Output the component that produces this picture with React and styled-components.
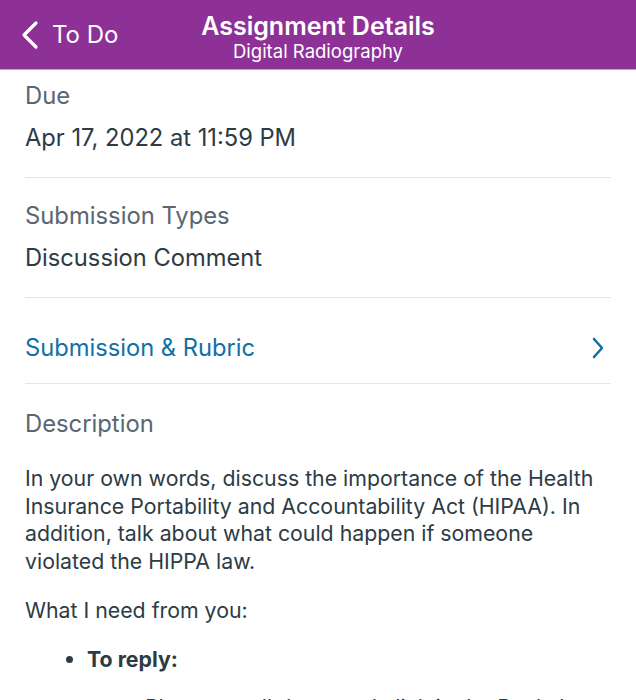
import React from 'react';
import styled, { createGlobalStyle } from 'styled-components';

const GlobalStyle = createGlobalStyle`
  html, body {
    margin: 0;
    padding: 0;
    background: #ffffff;
    font-family: Inter, Roboto, "Noto Sans", "Liberation Sans", sans-serif;
    -webkit-font-smoothing: antialiased;
  }
`;

const Page = styled.div`
  width: 636px;
  height: 700px;
  overflow: hidden;
  background: #fff;
`;

const Header = styled.div`
  height: 70px;
  background: #8d3197;
  display: grid;
  grid-template-columns: 1fr auto 1fr;
  align-items: center;
  color: #fff;
  box-sizing: border-box;
  border-bottom: 1px solid #c79ccd;
`;

const Back = styled.div`
  display: flex;
  align-items: center;
  gap: 12px;
  padding-left: 20px;
  font-size: 24px;
  line-height: 1;
`;

const TitleBlock = styled.div`
  display: flex;
  flex-direction: column;
  align-items: center;
  padding-top: 4px;
`;

const Title = styled.div`
  font-size: 25px;
  font-weight: 600;
  line-height: 28px;
`;

const Subtitle = styled.div`
  font-size: 18.5px;
  line-height: 22px;
`;

const Content = styled.div`
  padding: 0 25px;
`;

const Section = styled.div`
  padding: ${p => (p.$first ? '12px' : p.$last ? '26px' : '24px')} 0 25px;
  border-bottom: ${p => (p.$last ? 'none' : '1px solid #e4e6e8')};
  display: flex;
  flex-direction: column;
  gap: 14px;
`;

const Label = styled.div`
  font-size: 23.8px;
  line-height: 28px;
  color: #5a6672;
`;

const Value = styled.div`
  font-size: 23.7px;
  line-height: 28px;
  color: #2d3b45;
`;

const LinkRow = styled.div`
  display: flex;
  align-items: center;
  justify-content: space-between;
  padding: 36px 6px 21px 0;
  border-bottom: 1px solid #e4e6e8;
  color: #1270a6;
  font-size: 23.7px;
  line-height: 28px;
`;

const Body = styled.div`
  margin-top: 13px;
  font-size: 21.3px;
  line-height: 27.7px;
  color: #2d3b45;

  p {
    margin: 0 0 21px;
  }

  ul {
    margin: 0;
    padding-left: 62px;
  }

  li {
    margin-bottom: 21px;
  }
`;

const SubList = styled.ul`
  list-style: none;
  padding-left: 58px !important;
  margin-top: 21px !important;
`;

const ChevronLeft = () => (
  <svg width="20" height="30" viewBox="0 0 20 30" fill="none">
    <path d="M16 3 L4 15 L16 27" stroke="#fff" strokeWidth="3.2" strokeLinecap="round" strokeLinejoin="round" />
  </svg>
);

const ChevronRight = () => (
  <svg width="14" height="22" viewBox="0 0 14 22" fill="none">
    <path d="M3 2 L11 11 L3 20" stroke="#1270a6" strokeWidth="2.6" strokeLinecap="round" strokeLinejoin="round" />
  </svg>
);

const App = () => {
  return (
    <Page>
      <GlobalStyle />
      <Header>
        <Back>
          <ChevronLeft />
          <span>To Do</span>
        </Back>
        <TitleBlock>
          <Title>Assignment Details</Title>
          <Subtitle>Digital Radiography</Subtitle>
        </TitleBlock>
        <div />
      </Header>
      <Content>
        <Section $first>
          <Label>Due</Label>
          <Value>Apr 17, 2022 at 11:59 PM</Value>
        </Section>
        <Section>
          <Label>Submission Types</Label>
          <Value>Discussion Comment</Value>
        </Section>
        <LinkRow>
          <span>Submission &amp; Rubric</span>
          <ChevronRight />
        </LinkRow>
        <Section $last>
          <Label>Description</Label>
          <Body>
            <p>
              In your own words, discuss the importance of the Health Insurance
              Portability and Accountability Act (HIPAA). In addition, talk about
              what could happen if someone violated the HIPPA law.
            </p>
            <p>What I need from you:</p>
            <ul>
              <li>
                <strong>To reply:</strong>
                <SubList>
                  <li>Please scroll down and click in the Reply box.</li>
                </SubList>
              </li>
            </ul>
          </Body>
        </Section>
      </Content>
    </Page>
  );
};

export default App;
